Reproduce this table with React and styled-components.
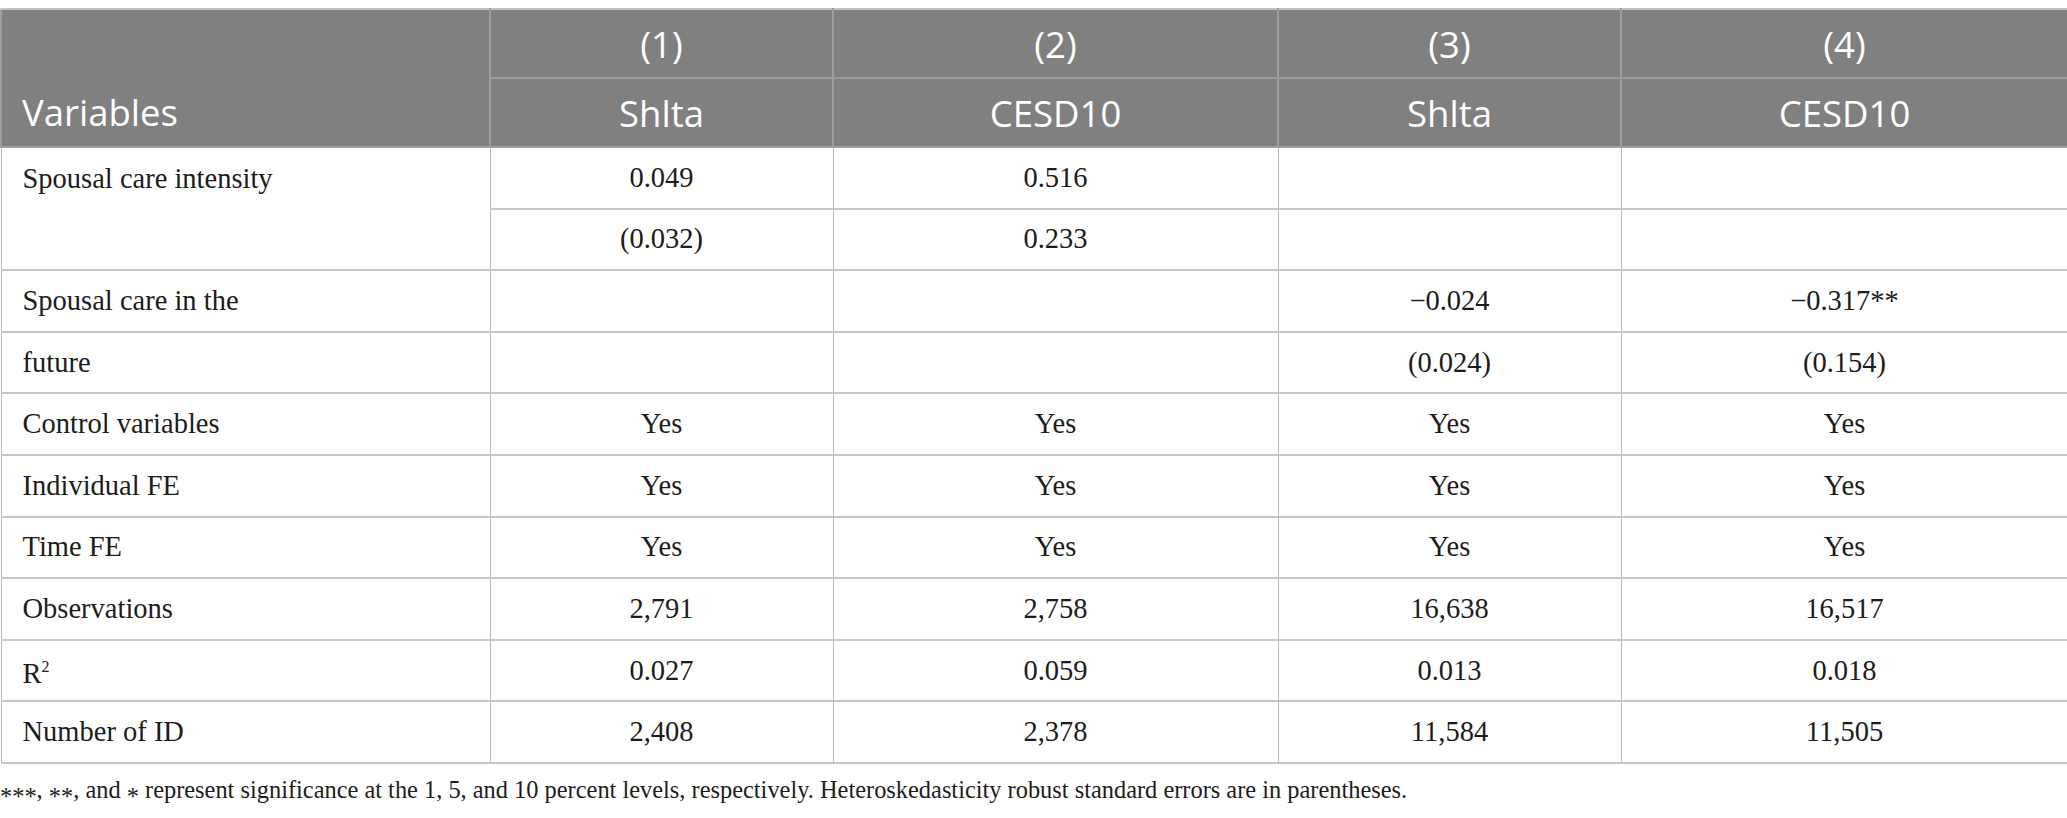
import styled, { createGlobalStyle } from "styled-components"

const Global = createGlobalStyle`
  body {
    margin: 0;
    background: #fff;
  }
`

const Page = styled.div`
  width: 2067px;
  padding-top: 8px;
`

const Table = styled.table`
  width: 2067px;
  border-collapse: collapse;
  table-layout: fixed;
  font-family: "Liberation Serif", "Times New Roman", serif;
`

const HeadCell = styled.th`
  background: #7f807f;
  color: #fff;
  font-family: "Open Sans", "Noto Sans", sans-serif;
  font-weight: 400;
  font-size: 36.5px;
  line-height: 48px;
  height: 67px;
  text-align: ${(p) => (p.$left ? "left" : "center")};
  vertical-align: ${(p) => (p.$left ? "bottom" : "middle")};
  padding: ${(p) => (p.$left ? "0 0 10px 20px" : "0")};
  border: 2px solid #9d9e9d;
  border-top-color: #c4c4c4;
`

const Cell = styled.td`
  font-size: 28.5px;
  line-height: 32px;
  color: #1c1c1c;
  height: 59.6px;
  text-align: ${(p) => (p.$label ? "left" : "center")};
  vertical-align: ${(p) => (p.$top ? "top" : "middle")};
  padding: ${(p) => (p.$label ? "0 0 0 21px" : "0")};
  padding-top: ${(p) => (p.$top ? "15px" : "0")};
  border-top: 2px solid #c8c8c8;
  border-bottom: 2px solid #c8c8c8;
  border-left: 1px solid #bcbcbc;
  border-right: 1px solid #bcbcbc;
`

const Note = styled.p`
  margin: 12px 0 0;
  font-family: "Liberation Serif", "Times New Roman", serif;
  font-size: 24.4px;
  line-height: 28px;
  color: #1c1c1c;
`

const Star = styled.span`
  position: relative;
  top: 0.3em;
`

const widths = [489, 343, 445, 343, 447]

const rows = [
  { label: "Control variables", vals: ["Yes", "Yes", "Yes", "Yes"] },
  { label: "Individual FE", vals: ["Yes", "Yes", "Yes", "Yes"] },
  { label: "Time FE", vals: ["Yes", "Yes", "Yes", "Yes"] },
  { label: "Observations", vals: ["2,791", "2,758", "16,638", "16,517"] },
  { label: <>R<sup style={{ fontSize: "16px" }}>2</sup></>, vals: ["0.027", "0.059", "0.013", "0.018"] },
  { label: "Number of ID", vals: ["2,408", "2,378", "11,584", "11,505"] },
]

export default function App() {
  return (
    <Page>
      <Global />
      <Table>
        <colgroup>
          {widths.map((w, i) => (
            <col key={i} style={{ width: w }} />
          ))}
        </colgroup>
        <thead>
          <tr>
            <HeadCell $left rowSpan={2}>Variables</HeadCell>
            <HeadCell>(1)</HeadCell>
            <HeadCell>(2)</HeadCell>
            <HeadCell>(3)</HeadCell>
            <HeadCell>(4)</HeadCell>
          </tr>
          <tr>
            <HeadCell>Shlta</HeadCell>
            <HeadCell>CESD10</HeadCell>
            <HeadCell>Shlta</HeadCell>
            <HeadCell>CESD10</HeadCell>
          </tr>
        </thead>
        <tbody>
          <tr>
            <Cell $label $top rowSpan={2}>Spousal care intensity</Cell>
            <Cell>0.049</Cell>
            <Cell>0.516</Cell>
            <Cell />
            <Cell />
          </tr>
          <tr>
            <Cell>(0.032)</Cell>
            <Cell>0.233</Cell>
            <Cell />
            <Cell />
          </tr>
          <tr>
            <Cell $label>Spousal care in the</Cell>
            <Cell />
            <Cell />
            <Cell>−0.024</Cell>
            <Cell>−0.317**</Cell>
          </tr>
          <tr>
            <Cell $label>future</Cell>
            <Cell />
            <Cell />
            <Cell>(0.024)</Cell>
            <Cell>(0.154)</Cell>
          </tr>
          {rows.map((r, i) => (
            <tr key={i}>
              <Cell $label>{r.label}</Cell>
              {r.vals.map((v, j) => (
                <Cell key={j}>{v}</Cell>
              ))}
            </tr>
          ))}
        </tbody>
      </Table>
      <Note>
        <Star>***</Star>, <Star>**</Star>, and <Star>*</Star> represent significance at the 1, 5, and 10 percent levels, respectively. Heteroskedasticity robust standard errors are in parentheses.
      </Note>
    </Page>
  )
}
